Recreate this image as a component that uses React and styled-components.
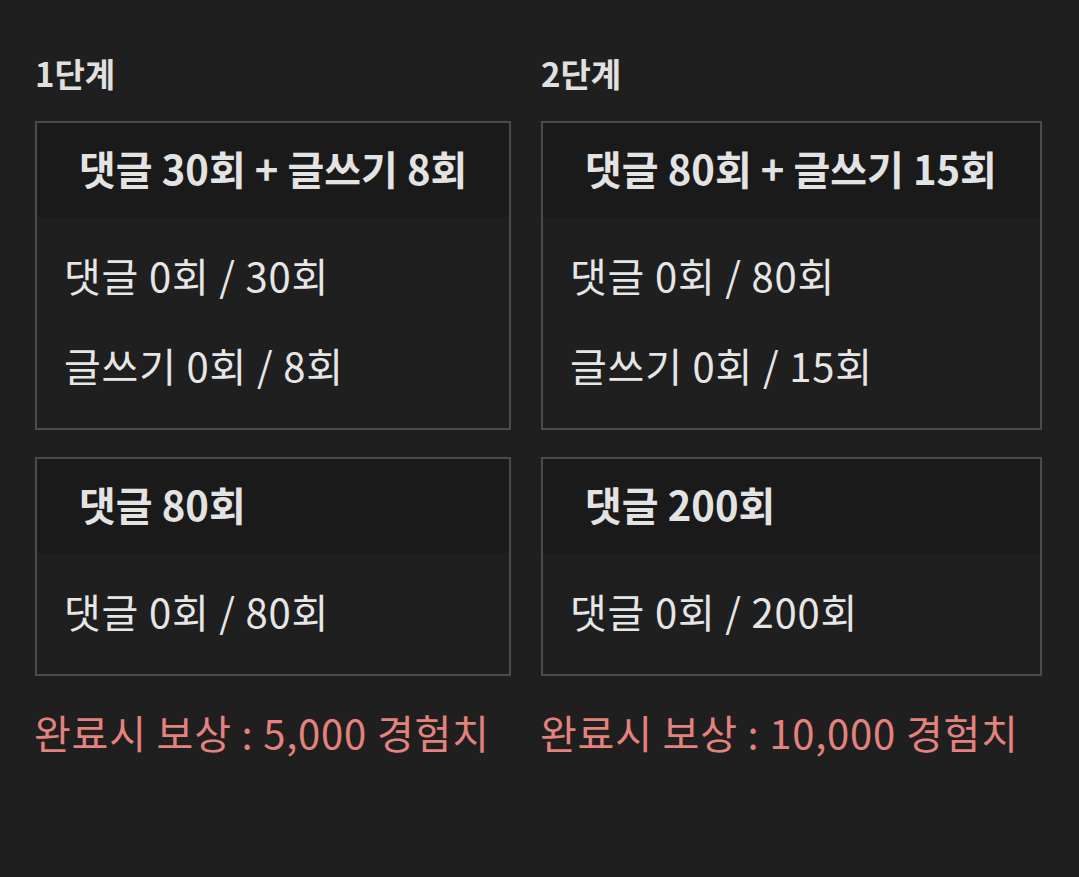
import React from 'react';
import styled, { createGlobalStyle } from 'styled-components';

const GlobalStyle = createGlobalStyle`
  html, body {
    margin: 0;
    padding: 0;
    background: #1f1f1f;
  }
  body {
    font-family: "Noto Sans CJK KR", "Noto Sans", sans-serif;
    color: #e2e2e2;
  }
`;

const PageStyle = styled.div`
  display: grid;
  grid-template-columns: 476px 501px;
  column-gap: 30px;
  padding: 49px 0 0 35px;
  min-height: 877px;
  box-sizing: border-box;
`;

const ColumnStyle = styled.div`
  display: flex;
  flex-direction: column;
`;

const StageTitleStyle = styled.h2`
  margin: 0 0 24px 0;
  font-size: 33px;
  font-weight: 700;
  line-height: 48px;
  color: #e0e0e0;
`;

const CardStyle = styled.div`
  border: 2px solid #4b4b4b;
  margin-bottom: 27px;
  display: flex;
  flex-direction: column;
`;

const CardHeaderStyle = styled.div`
  height: 94px;
  display: flex;
  align-items: center;
  padding: 0 42px 4px 42px;
  box-sizing: border-box;
  background: #1a1a1a;
  font-size: 40px;
  font-weight: 700;
  color: #e3e3e3;
  white-space: nowrap;
`;

const CardBodyStyle = styled.div`
  padding: 15px 27px 16px 27px;
  background: #1f1f1f;
`;

const ProgressLineStyle = styled.div`
  height: 90px;
  padding-bottom: 5px;
  box-sizing: border-box;
  display: flex;
  align-items: center;
  font-size: 40px;
  font-weight: 400;
  letter-spacing: 0.8px;
  color: #e6e6e6;
  white-space: nowrap;
`;

const RewardStyle = styled.div`
  margin-top: 4px;
  margin-left: -1px;
  font-size: 40px;
  line-height: 50px;
  letter-spacing: 0.8px;
  color: #e4827e;
  white-space: nowrap;
`;

const stages = [
  {
    title: '1단계',
    reward: '5,000',
    missions: [
      {
        name: '댓글 30회 + 글쓰기 8회',
        progress: ['댓글 0회 / 30회', '글쓰기 0회 / 8회']
      },
      { name: '댓글 80회', progress: ['댓글 0회 / 80회'] }
    ]
  },
  {
    title: '2단계',
    reward: '10,000',
    missions: [
      {
        name: '댓글 80회 + 글쓰기 15회',
        progress: ['댓글 0회 / 80회', '글쓰기 0회 / 15회']
      },
      { name: '댓글 200회', progress: ['댓글 0회 / 200회'] }
    ]
  }
];

const MissionCard = ({ mission }) => (
  <CardStyle>
    <CardHeaderStyle>{mission.name}</CardHeaderStyle>
    <CardBodyStyle>
      {mission.progress.map(line => (
        <ProgressLineStyle key={line}>{line}</ProgressLineStyle>
      ))}
    </CardBodyStyle>
  </CardStyle>
);

const StageColumn = ({ stage }) => (
  <ColumnStyle>
    <StageTitleStyle>{stage.title}</StageTitleStyle>
    {stage.missions.map(mission => (
      <MissionCard key={mission.name} mission={mission} />
    ))}
    <RewardStyle>완료시 보상 : {stage.reward} 경험치</RewardStyle>
  </ColumnStyle>
);

const App = () => (
  <>
    <GlobalStyle />
    <PageStyle>
      {stages.map(stage => (
        <StageColumn key={stage.title} stage={stage} />
      ))}
    </PageStyle>
  </>
);

export default App;
